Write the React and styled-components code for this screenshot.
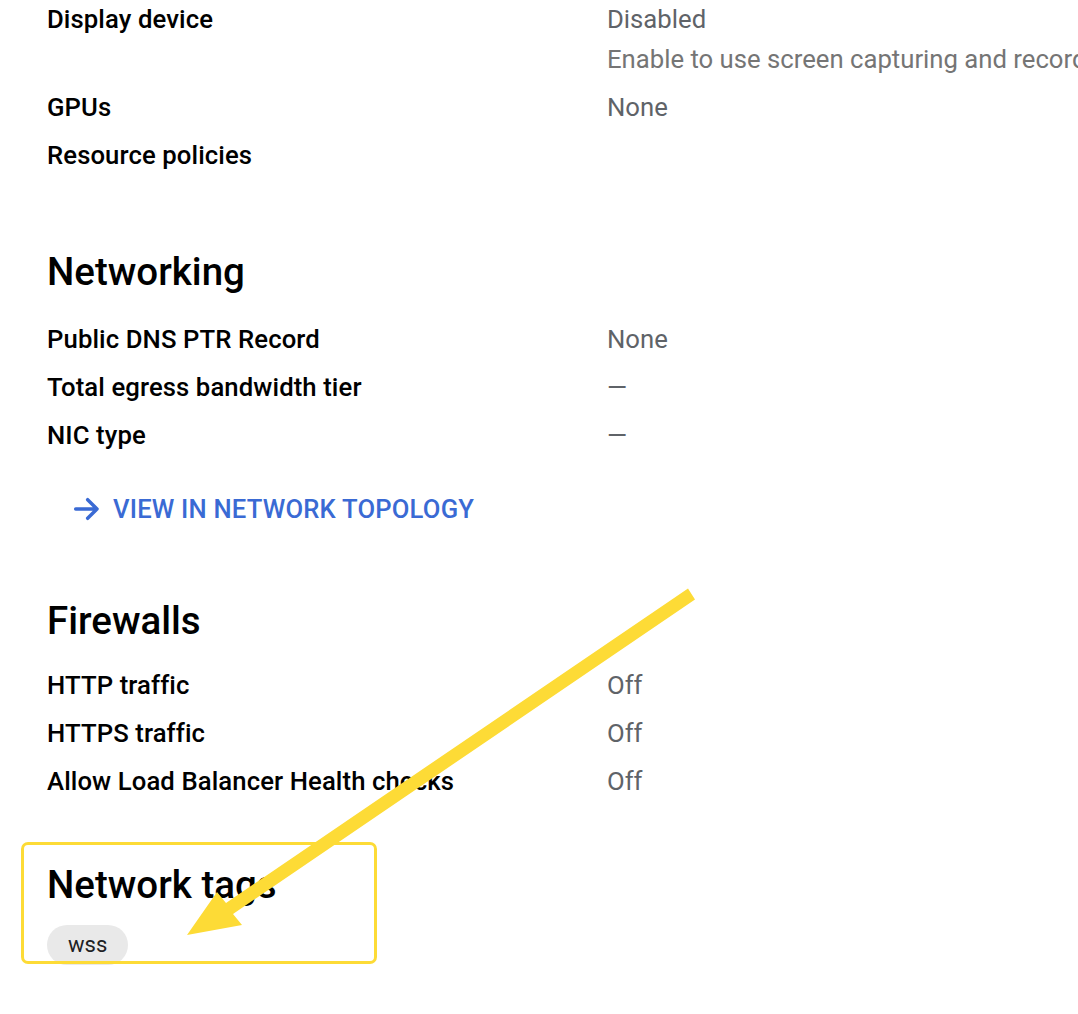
import React from "react";
import styled, { createGlobalStyle } from "styled-components";

const Global = createGlobalStyle`
  html, body {
    margin: 0;
    padding: 0;
    background: #fff;
    overflow: hidden;
  }
  body {
    font-family: Roboto, "Noto Sans", "Liberation Sans", sans-serif;
    color: #202124;
  }
`;

const Page = styled.div`
  position: relative;
  width: 1078px;
  height: 1014px;
  overflow: hidden;
`;

const Content = styled.div`
  margin-top: -5px;
  padding-left: 47px;
`;

const Section = styled.section`
  margin-top: ${(p) => p.$top || 0}px;
`;

const Heading = styled.h2`
  margin: 0 0 ${(p) => p.$gap || 19}px;
  font-size: 38.5px;
  font-weight: 500;
  line-height: 48px;
  color: #000;
`;

const Row = styled.div`
  display: grid;
  grid-template-columns: 560px 1fr;
  padding: 4px 0;
  font-size: 25.7px;
  line-height: 40px;
`;

const Label = styled.div`
  font-weight: 500;
  color: #000;
  white-space: nowrap;
  letter-spacing: 0.1px;
`;

const Value = styled.div`
  color: #5f6368;
  white-space: nowrap;
`;

const Hint = styled.div`
  color: #757575;
  white-space: nowrap;
  overflow: hidden;
`;

const LinkButton = styled.a`
  display: inline-flex;
  align-items: center;
  gap: 10px;
  margin: 30px 0 0 24px;
  font-size: 25.6px;
  line-height: 40px;
  font-weight: 500;
  letter-spacing: 0.2px;
  color: #3a6ad4;
  text-decoration: none;
  svg {
    width: 32px;
    height: 32px;
  }
`;

const Chip = styled.span`
  display: inline-block;
  height: 40px;
  line-height: 40px;
  padding: 0 21px;
  border-radius: 20px;
  background: #e9e9e9;
  font-size: 22px;
  color: #202124;
`;

const Highlight = styled.div`
  position: absolute;
  left: 21px;
  top: 842px;
  width: 350px;
  height: 116px;
  border: 3px solid #fddb36;
  border-radius: 7px;
  pointer-events: none;
`;

const Overlay = styled.svg`
  position: absolute;
  left: 0;
  top: 0;
  width: 1078px;
  height: 1014px;
  pointer-events: none;
`;

const rows = {
  machine: [
    { label: "Display device", value: "Disabled", hint: "Enable to use screen capturing and recording tools" },
    { label: "GPUs", value: "None" },
    { label: "Resource policies", value: "" },
  ],
  networking: [
    { label: "Public DNS PTR Record", value: "None" },
    { label: "Total egress bandwidth tier", value: "—" },
    { label: "NIC type", value: "—" },
  ],
  firewalls: [
    { label: "HTTP traffic", value: "Off" },
    { label: "HTTPS traffic", value: "Off" },
    { label: "Allow Load Balancer Health checks", value: "Off" },
  ],
};

const DetailRow = ({ label, value, hint }) => (
  <Row>
    <Label>{label}</Label>
    <div>
      <Value>{value}</Value>
      {hint && <Hint>{hint}</Hint>}
    </div>
  </Row>
);

export default function App() {
  return (
    <Page>
      <Global />
      <Content>
        {rows.machine.map((r) => (
          <DetailRow key={r.label} {...r} />
        ))}

        <Section $top={69}>
          <Heading>Networking</Heading>
          {rows.networking.map((r) => (
            <DetailRow key={r.label} {...r} />
          ))}
          <LinkButton href="#">
            <svg viewBox="0 0 24 24" fill="none" stroke="currentColor" strokeWidth="2.6" strokeLinecap="round" strokeLinejoin="round">
              <path d="M3.5 12h16M12.5 5l7 7-7 7" />
            </svg>
            VIEW IN NETWORK TOPOLOGY
          </LinkButton>
        </Section>

        <Section $top={68}>
          <Heading $gap={16}>Firewalls</Heading>
          {rows.firewalls.map((r) => (
            <DetailRow key={r.label} {...r} />
          ))}
        </Section>

        <Section $top={56}>
          <Heading $gap={16}>Network tags</Heading>
          <Chip>wss</Chip>
        </Section>
      </Content>

      <Highlight />
      <Overlay viewBox="0 0 1078 1014">
        <polygon
          fill="#fddb36"
          points="688,588.5 695,599.5 233,914 242,925 187,935 217,892 226,903"
        />
      </Overlay>
    </Page>
  );
}
